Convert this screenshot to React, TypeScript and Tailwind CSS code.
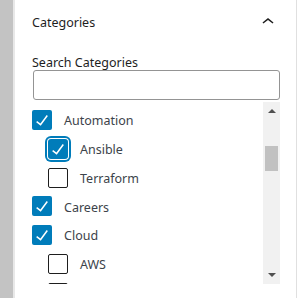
import React from 'react';

type Item = { label: string; checked: boolean; child?: boolean; focus?: boolean };

const items: Item[] = [
  { label: 'Automation', checked: true },
  { label: 'Ansible', checked: true, child: true, focus: true },
  { label: 'Terraform', checked: false, child: true },
  { label: 'Careers', checked: true },
  { label: 'Cloud', checked: true },
  { label: 'AWS', checked: false, child: true },
  { label: '', checked: false, child: true },
];

function Checkbox({ checked, focus }: { checked: boolean; focus?: boolean }) {
  if (!checked) {
    return <span className="w-5 h-5 shrink-0 rounded-[2px] border border-[#1e1e1e] bg-white" />;
  }
  return (
    <span
      className={
        'w-5 h-5 shrink-0 bg-[#007cba] flex items-center justify-center ' +
        (focus ? 'shadow-[0_0_0_1px_#fff,0_0_0_3px_#007cba] rounded-[3px]' : 'rounded-[2px]')
      }
    >
      <svg width="20" height="20" viewBox="2 2 20 20" fill="#fff">
        <path d="M16.7 7.1l-6.3 8.5-3.3-2.5-.9 1.2 4.5 3.4L17.9 8z" />
      </svg>
    </span>
  );
}

export default function App() {
  return (
    <div className="w-[298px] h-[298px] flex bg-white overflow-hidden text-[12.5px] font-['Noto_Sans',sans-serif]">
      <div className="w-[13px] shrink-0 bg-[#c3c3c3]" />
      <div className="w-[2px] shrink-0 bg-[#e8e8e8]" />
      <div className="flex-1 pl-[17px] pr-4 border-r border-[#e0e0e0]">
        <div className="h-11 flex items-center justify-between">
          <span className="mt-[3px] text-[#1e1e1e]">Categories</span>
          <svg width="24" height="24" viewBox="0 0 24 24" fill="#1e1e1e">
            <path d="M6.5 12.4L12 8l5.5 4.4-.9 1.2L12 10l-4.6 3.6-.9-1.2z" />
          </svg>
        </div>
        <label className="block mt-[10px] pt-[1px] h-4 leading-4 text-[#1e1e1e]">Search Categories</label>
        <input className="block ml-px w-[247px] h-[30px] border border-[#949494] rounded-[3px] outline-none" />
        <div className="mt-[2px] h-[182px] flex overflow-hidden">
          <ul className="flex-1 flex flex-col gap-[8.83px] pt-2">
            {items.map((it, i) => (
              <li
                key={i}
                className={'flex items-center gap-3 h-5 text-[#3c434a] ' + (it.child ? 'pl-4' : '')}
              >
                <Checkbox checked={it.checked} focus={it.focus} />
                {it.label && <span className="mt-[3px]">{it.label}</span>}
              </li>
            ))}
          </ul>
          <div className="w-[17px] shrink-0 bg-[#f1f1f1] flex flex-col items-center">
            <svg className="mt-[7px]" width="8" height="4" viewBox="0 0 8 4" fill="#505050">
              <path d="M0 4L4 0L8 4z" />
            </svg>
            <div className="mt-[33px] w-[13px] h-[25px] bg-[#c1c1c1]" />
            <div className="flex-1" />
            <svg className="mb-[7px]" width="8" height="4" viewBox="0 0 8 4" fill="#505050">
              <path d="M0 0L8 0L4 4z" />
            </svg>
          </div>
        </div>
      </div>
      <div className="w-px shrink-0 bg-white" />
    </div>
  );
}
